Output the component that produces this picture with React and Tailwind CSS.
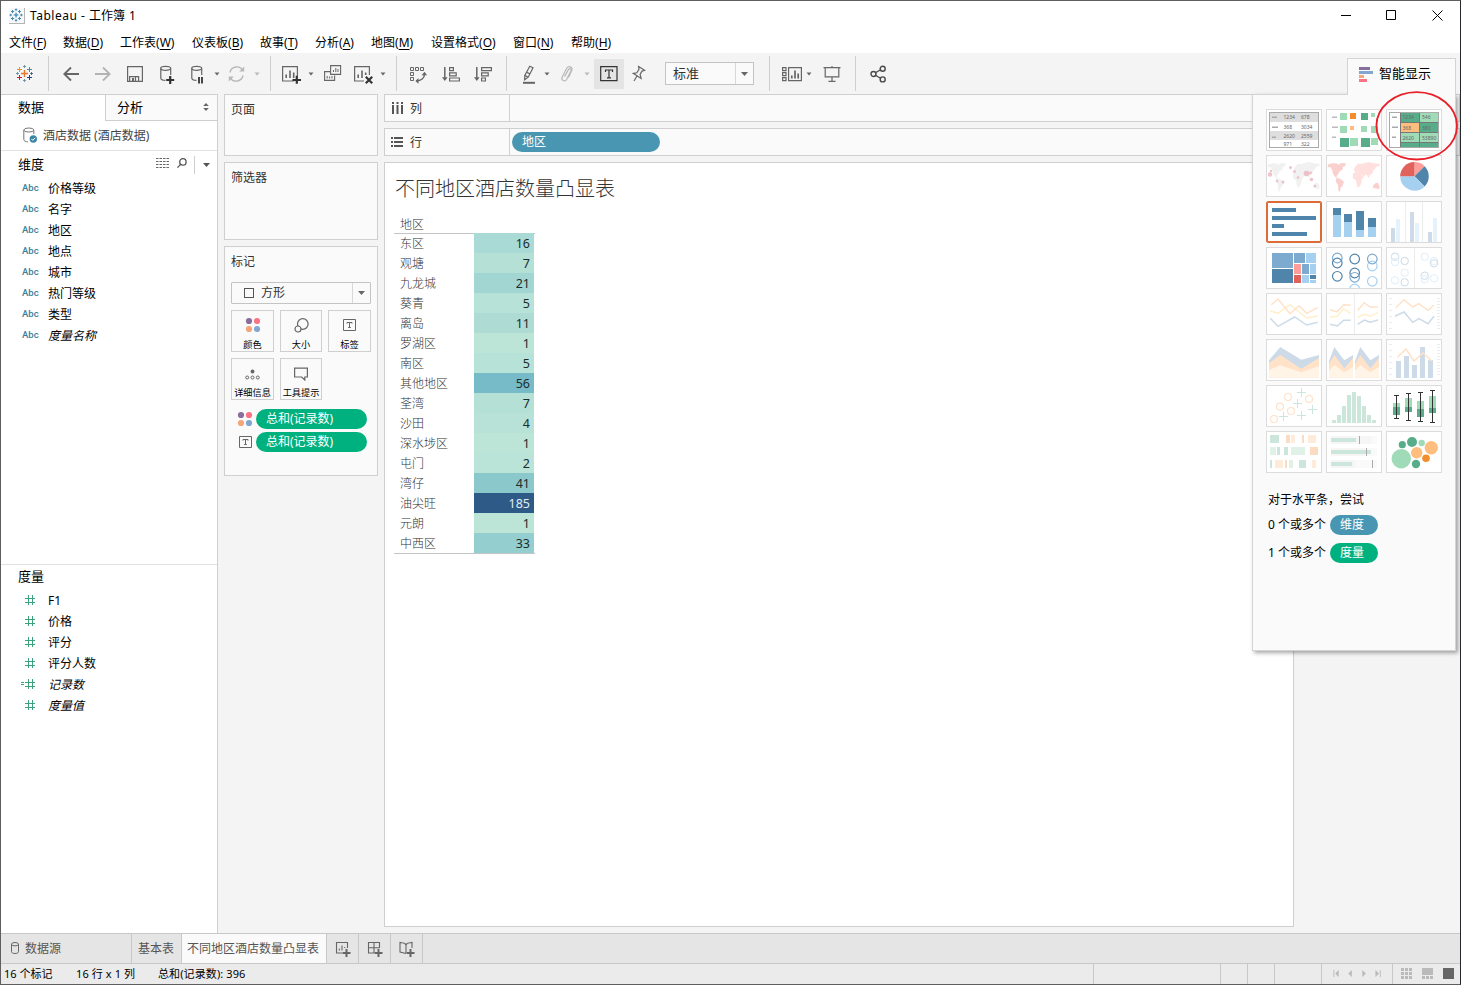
import React from "react";

const MENUS = [
  { label: "文件", k: "F", w: "w-[54px]" },
  { label: "数据", k: "D", w: "w-[57px]" },
  { label: "工作表", k: "W", w: "w-[72px]" },
  { label: "仪表板", k: "B", w: "w-[68px]" },
  { label: "故事", k: "T", w: "w-[55px]" },
  { label: "分析", k: "A", w: "w-[56px]" },
  { label: "地图", k: "M", w: "w-[60px]" },
  { label: "设置格式", k: "O", w: "w-[82px]" },
  { label: "窗口", k: "N", w: "w-[58px]" },
  { label: "帮助", k: "H", w: "w-[60px]" },
];

const DIMENSIONS = ["价格等级", "名字", "地区", "地点", "城市", "热门等级", "类型", "度量名称"];
const MEASURES = ["F1", "价格", "评分", "评分人数", "记录数", "度量值"];

const ROWS = [
  { name: "东区", value: 16, cell: "bg-[#a9dad5]" },
  { name: "观塘", value: 7, cell: "bg-[#b4e0d6]" },
  { name: "九龙城", value: 21, cell: "bg-[#a1d6d2]" },
  { name: "葵青", value: 5, cell: "bg-[#b7e2d7]" },
  { name: "离岛", value: 11, cell: "bg-[#aedcd5]" },
  { name: "罗湖区", value: 1, cell: "bg-[#bce5d8]" },
  { name: "南区", value: 5, cell: "bg-[#b7e2d7]" },
  { name: "其他地区", value: 56, cell: "bg-[#77bbc8]" },
  { name: "荃湾", value: 7, cell: "bg-[#b4e0d6]" },
  { name: "沙田", value: 4, cell: "bg-[#b8e2d7]" },
  { name: "深水埗区", value: 1, cell: "bg-[#bce5d8]" },
  { name: "屯门", value: 2, cell: "bg-[#bae4d8]" },
  { name: "湾仔", value: 41, cell: "bg-[#8ac8cc]" },
  { name: "油尖旺", value: 185, cell: "bg-[#2d5a87]" },
  { name: "元朗", value: 1, cell: "bg-[#bce5d8]" },
  { name: "中西区", value: 33, cell: "bg-[#94cecf]" },
];

const DARK = "#4f84ab";
const MID = "#7daacf";
const LIGHT = "#a6d0f0";
const GREEN = "#57ad8a";
const MINT = "#9fdbb7";
const PALE_BLUE = "#cddbe8";
const PALE_ORANGE = "#ffe2c8";
const PALE_YELLOW = "#fff0cc";
const PALE_GREEN = "#cce6dc";

/* ---------- toolbar ---------- */

const Ico = ({ w, className, color = "#666", children }) => (
  <svg
    width={w}
    height="20"
    viewBox={`0 0 ${w} 20`}
    fill="none"
    stroke={color}
    strokeWidth="1.2"
    className={`shrink-0 ${className}`}
  >
    {children}
  </svg>
);

const Caret = ({ className, color = "#666" }) => (
  <svg width="6" height="4" viewBox="0 0 6 4" fill={color} className={`shrink-0 ${className}`}>
    <path d="M.5 .5h5L3 3.5z" />
  </svg>
);

const Divider = ({ className }) => <div className={`h-[35px] w-px shrink-0 bg-[#cfcfcf] ${className}`} />;

const Plus = ({ x, y, r, color, sw = 1 }) => (
  <path d={`M${x - r} ${y}h${2 * r}M${x} ${y - r}v${2 * r}`} stroke={color} strokeWidth={sw} fill="none" />
);

const Toolbar = () => (
  <div className="flex h-[41px] items-center bg-[#f4f4f4]">
    <Ico w={18} className="ml-[14px]">
      <Plus x={9.5} y={9.5} r={3.5} color="#e8762d" sw={1.4} />
      <Plus x={4.5} y={5.5} r={2.5} color="#eb912c" />
      <Plus x={14.5} y={5.5} r={2.5} color="#59879b" />
      <Plus x={4.5} y={13.5} r={2.5} color="#c72035" />
      <Plus x={14.5} y={13.5} r={2.5} color="#1f457e" />
      <Plus x={9.5} y={2.5} r={1.5} color="#7099a6" />
      <Plus x={9.5} y={16.5} r={1.5} color="#7099a6" />
      <Plus x={2.5} y={9.5} r={1.5} color="#7099a6" />
      <Plus x={16.5} y={9.5} r={1.5} color="#5b6591" />
    </Ico>
    <Divider className="ml-[15px]" />
    <Ico w={16} className="ml-[14px]">
      <path d="M1 10h15M8 3.5L1.3 10L8 16.5" strokeWidth="1.8" />
    </Ico>
    <Ico w={16} className="ml-4" color="#b3b3b3">
      <path d="M0 10h15M8 3.5L14.7 10L8 16.5" strokeWidth="1.8" />
    </Ico>
    <Ico w={16} className="ml-4">
      <path d="M.6 2.6h14.8v14.8H.6zM2.6 17v-4.4h9V17M8.5 12.6V17" />
      <path d="M5 14h2v3H5z" fill="#666" stroke="none" />
    </Ico>
    <Ico w={15} className="ml-[17px]">
      <path d="M.8 4.5v9.5c0 1.4 2 2.3 4.7 2.4M10.7 4.5V11" />
      <ellipse cx="5.7" cy="4.3" rx="5" ry="2" />
      <path d="M6.2 16h8M10.2 12v8" stroke="#333" strokeWidth="2.2" />
    </Ico>
    <Ico w={15} className="ml-4">
      <path d="M.8 4.5v9.5c0 1.4 2 2.3 4.7 2.4M10.7 4.5V11" />
      <ellipse cx="5.7" cy="4.3" rx="5" ry="2" />
      <path d="M8 13v6.5M11 13v6.5" stroke="#333" strokeWidth="1.8" />
    </Ico>
    <Caret className="ml-2" />
    <Ico w={18} className="ml-2" color="#b8b8b8">
      <path d="M2 8.5A7 7 0 0 1 14.8 6.2M15 11.5A7 7 0 0 1 2.2 13.8" strokeWidth="1.4" />
      <path d="M11.2 7.5h5V2.5zM5.8 12.5H.8v5z" fill="#b8b8b8" stroke="none" />
    </Ico>
    <Caret className="ml-2" color="#b8b8b8" />
    <Divider className="ml-[10px]" />
    <Ico w={20} className="ml-[11px]">
      <path d="M12 17H.6V2.6h14.8V12" />
      <path d="M4.2 14v-3.5M8 14V6.5M11.7 14V8.5" strokeWidth="1.6" />
      <path d="M10.5 16h8.5M14.8 11.8v8" stroke="#333" strokeWidth="2.2" />
    </Ico>
    <Caret className="ml-[6px]" />
    <Ico w={18} className="ml-[10px]">
      <path d="M6.6 1.6h10v8.8h-10zM6 7.6H.6v8.8h10v-5" strokeWidth="1.1" />
      <path d="M9.5 8V6M11.8 8V4M14 8V5M3.2 14.5V12M5.6 14.5V12.5M8 14.5V12" strokeWidth="1" />
    </Ico>
    <Ico w={20} className="ml-3">
      <path d="M10 17H.6V2.6h14.8V11" />
      <path d="M4.2 14v-3.5M8 14V6.5M11.7 11V8.5" strokeWidth="1.6" />
      <path d="M11.8 12.8l6.4 6.4M18.2 12.8l-6.4 6.4" stroke="#333" strokeWidth="2.2" />
    </Ico>
    <Caret className="ml-[6px]" />
    <Divider className="ml-[10px]" />
    <Ico w={18} className="ml-[13px]">
      <path d="M.5 3.5h3v3h-3zM5.5 3.5h3v3h-3zM10.5 3.5h3v3h-3zM.5 8.5h3v3h-3zM.5 13.5h3v3h-3z" strokeWidth="1" />
      <path d="M6.500 17c4.500 0 8-2.800 8-7" strokeWidth="1.4" />
      <path d="M8.500 14L5.400 17l3.100 2.800zM11.600 11.300l3-3.500 2.400 3.500z" fill="#666" stroke="none" />
    </Ico>
    <Ico w={18} className="ml-[14px]">
      <path d="M2.8 3v12" strokeWidth="1.5" />
      <path d="M0 13.2h5.6L2.8 17z" fill="#666" stroke="none" />
      <path d="M7.6 3.6h3.8v3H7.6zM7.6 8.8h6.6v3H7.6zM7.6 14h9.8v3H7.6z" />
    </Ico>
    <Ico w={18} className="ml-[14px]">
      <path d="M2.8 3v12" strokeWidth="1.5" />
      <path d="M0 13.2h5.6L2.8 17z" fill="#666" stroke="none" />
      <path d="M7.6 3.6h9.8v3H7.6zM7.6 8.8h6.6v3H7.6zM7.6 14h3.8v3H7.6z" />
    </Ico>
    <Divider className="ml-[14px]" />
    <Ico w={14} className="ml-[15px]">
      <path d="M7.800 2.300l3.200 1.400-4.800 9.500-3.600 2.600.2-4.400zM2.800 11.400l3.400 1.800M4.600 8.200l3.400 1.700" />
      <path d="M1 18.800h12" strokeWidth="2" />
    </Ico>
    <Caret className="ml-2" />
    <Ico w={14} className="ml-[10px]" color="#b8b8b8">
      <path d="M4.600 12.600L8.400 5.600c1.300-1.900 3.400-.6 2.500 1.300L6.600 15.500c-1.700 2.800-5.800.8-4.500-2.200L6.700 4.200C8.500 1.200 13 3 11.800 6.300L8.500 13.500" />
    </Ico>
    <Caret className="ml-[10px]" color="#b8b8b8" />
    <div className="ml-1 flex h-[30px] w-[30px] shrink-0 items-center justify-center bg-[#e4e4e4]">
      <Ico w={18} className="" color="#333">
        <path d="M.7 2.700h16.300v14H.7z" />
        <path d="M5.500 8V6h7v2M9 6v7.800M7 13.800h4" />
      </Ico>
    </div>
    <Ico w={14} className="ml-2">
      <path d="M6.600 2.500l6 3.800-2.600.8-1.900 3.300 1 4-7.600-5 3.300-.6 2.200-3.500zM5 12L2 17" />
    </Ico>
    <div className="ml-[19px] flex h-[23px] w-[89px] shrink-0 items-center border border-[#c4c4c4] bg-[#fafafa] text-[13px] text-[#333]">
      <span className="flex-1 pl-[7px]">标准</span>
      <span className="flex h-full w-[18px] items-center justify-center border-l border-[#d8d8d8]">
        <svg width="7" height="4" viewBox="0 0 7 4" fill="#666"><path d="M0 0h7L3.500 4z" /></svg>
      </span>
    </div>
    <Divider className="ml-[15px]" />
    <Ico w={21} className="ml-3">
      <path d="M.6 3.600h3.400v3H.6zM.6 8.600h3.400v3H.6zM.6 13.600h3.400v3H.6zM6.600 3.600h12.800v13H6.600z" />
      <path d="M9.800 14.500v-3M13 14.500v-8M16.200 14.500v-5" strokeWidth="1.700" />
    </Ico>
    <Caret className="ml-[3px]" />
    <Ico w={18} className="ml-[11px]">
      <path d="M.5 3.600h17M2.200 4v8.800h13.600V4M9 2v1.500M9 13v4M5.500 17.400h7" />
    </Ico>
    <Divider className="ml-[14px]" />
    <Ico w={17} className="ml-[14px]" color="#4a4a4a">
      <path d="M5 9l6-3.500M5 11l6 3.500" strokeWidth="1.300" />
      <circle cx="3.500" cy="10" r="2.500" strokeWidth="1.400" />
      <circle cx="12.700" cy="4.800" r="2.500" strokeWidth="1.400" />
      <circle cx="12.700" cy="15.400" r="2.500" strokeWidth="1.400" />
    </Ico>
  </div>
);

/* ---------- data pane ---------- */

const Hash = () => (
  <svg width="10" height="10" viewBox="0 0 10 10" fill="none" stroke="#3ba27c" strokeWidth="1" className="mb-[2px]">
    <path d="M0 3.500h10M0 7.500h10M3.500 0v10M7.500 0v10" />
  </svg>
);

const DataPane = () => (
  <div className="flex w-[217px] shrink-0 flex-col border-r border-[#cfcfcf] bg-white">
    <div className="flex h-[27px] border-t border-[#cfcfcf] text-[13px] text-black">
      <div className="flex w-[104px] items-center pl-[17px]">数据</div>
      <div className="flex flex-1 items-center justify-between border-b border-l border-[#cfcfcf] bg-[#fafafa] pl-[11px] pr-2">
        分析
        <svg width="6" height="8" viewBox="0 0 6 8" fill="#666" className="mb-[2px]">
          <path d="M3 0l2.800 3H.2zM3 8l2.800-3H.2z" />
        </svg>
      </div>
    </div>
    <div className="flex h-[30px] items-center border-b border-[#e2e2e2] pl-[22px] text-[12px] text-[#444]">
      <svg width="15" height="17" viewBox="0 0 15 17" fill="none" stroke="#777" className="mr-[5px]">
        <ellipse cx="5.800" cy="3" rx="5" ry="2" />
        <path d="M.8 3v9.500c0 1.400 2 2.300 4.200 2.400M10.800 3v4" />
        <circle cx="10.300" cy="12" r="3.700" fill="#3a87a5" stroke="none" />
        <path d="M8.500 12l1.300 1.300 2.400-2.500" stroke="#fff" />
      </svg>
      酒店数据 (酒店数据)
    </div>
    <div className="flex h-[27px] items-center pl-[17px] text-[13px] text-black">
      <span className="w-[138px]">维度</span>
      <svg width="13" height="10" viewBox="0 0 13 10" stroke="#666" strokeWidth="1" className="mb-[3px]">
        <path d="M0 .5h13M0 3.500h13M0 6.500h13M0 9.500h13" strokeDasharray="2.500 1" />
      </svg>
      <svg width="10" height="10" viewBox="0 0 10 10" fill="none" stroke="#555" strokeWidth="1.300" className="mb-[3px] ml-2">
        <circle cx="5.900" cy="3.900" r="3.200" />
        <path d="M3.600 6.400L.5 9.600" />
      </svg>
      <div className="ml-[7px] h-[18px] w-px bg-[#cfcfcf]" />
      <svg width="7" height="4" viewBox="0 0 7 4" fill="#555" className="ml-2"><path d="M0 0h7L3.500 4z" /></svg>
    </div>
    <div className="h-[386px] text-[12px] text-black">
      {DIMENSIONS.map((d) => (
        <div key={d} className="flex h-[21px] items-center pl-[21px]">
          <span className="w-[26px] font-[Roboto] text-[9.5px] font-medium text-[#3a7f9c]">Abc</span>
          <span className={d === "度量名称" ? "italic" : ""}>{d}</span>
        </div>
      ))}
    </div>
    <div className="flex h-[26px] items-center border-t border-[#e2e2e2] pb-[2px] pl-[17px] text-[13px] text-black">度量</div>
    <div className="text-[12px] text-black">
      {MEASURES.map((m) => (
        <div key={m} className="flex h-[21px] items-center pl-[20px]">
          <span className="flex w-[27px] items-center">
            <span className="mb-[2px] flex w-[4px] flex-col gap-px">
              {m === "记录数" && (
                <>
                  <i className="h-px w-[3px] bg-[#3ba27c]" />
                  <i className="h-px w-[3px] bg-[#3ba27c]" />
                </>
              )}
            </span>
            <Hash />
          </span>
          <span className={m === "记录数" || m === "度量值" ? "italic" : ""}>{m}</span>
        </div>
      ))}
    </div>
  </div>
);

/* ---------- cards ---------- */

const ColorDots = () => (
  <svg width="16" height="16" viewBox="0 0 16 16">
    <circle cx="4" cy="4" r="3.100" fill="#876f9b" />
    <circle cx="12" cy="4" r="3.100" fill="#fb7185" />
    <circle cx="4" cy="12" r="3.100" fill="#f4a67a" />
    <circle cx="12" cy="12" r="3.100" fill="#82a6d0" />
  </svg>
);

const LabelIcon = () => (
  <svg width="13" height="12" viewBox="0 0 13 12" fill="none" stroke="#666">
    <path d="M.5 .5h12v11H.5zM4 4.700V3.500h5v1.200M6.500 3.500v5M5.200 8.500h2.600" />
  </svg>
);

const MarkButton = ({ label, children }) => (
  <div className="flex h-[42px] flex-col items-center border border-[#cfcfcf] bg-[#fafafa]">
    <div className="flex h-[28px] items-center justify-center">{children}</div>
    <span className="whitespace-nowrap text-[9.2px] leading-[12px] text-black">{label}</span>
  </div>
);

const Card = ({ title, className, children }) => (
  <div className={`w-[154px] border border-[#cfcfcf] bg-[#fafafa] px-[6px] pt-[6px] ${className}`}>
    <div className="text-[12px] leading-[18px] text-[#333]">{title}</div>
    {children}
  </div>
);

const Cards = () => (
  <div className="ml-[6px] flex shrink-0 flex-col gap-[6px]">
    <Card title="页面" className="h-[62px]" />
    <Card title="筛选器" className="h-[78px]" />
    <Card title="标记" className="h-[230px]">
      <div className="mt-[11px] flex h-[22px] w-[140px] items-center rounded-[1px] border border-[#c4c4c4] text-[12px] text-[#333]">
        <div className="ml-3 mr-[7px] h-[10px] w-[10px] border border-[#555]" />
        <span className="flex-1">方形</span>
        <span className="flex h-full w-[18px] items-center justify-center border-l border-[#d8d8d8]">
          <svg width="7" height="4" viewBox="0 0 7 4" fill="#666"><path d="M0 0h7L3.500 4z" /></svg>
        </span>
      </div>
      <div className="mt-[6px] grid w-[140px] grid-cols-[43px_42px_43px] gap-[6px]">
        <MarkButton label="颜色"><ColorDots /></MarkButton>
        <MarkButton label="大小">
          <svg width="15" height="15" viewBox="0 0 15 15" fill="none" stroke="#666" strokeWidth="1.200">
            <circle cx="8.800" cy="6" r="5.300" />
            <circle cx="4" cy="11" r="3" fill="#fafafa" />
          </svg>
        </MarkButton>
        <MarkButton label="标签"><LabelIcon /></MarkButton>
        <MarkButton label="详细信息">
          <svg width="15" height="11" viewBox="0 0 15 11" fill="none" stroke="#666" className="mt-[3px]">
            <circle cx="7.500" cy="2.500" r="1.900" fill="#666" stroke="none" />
            <circle cx="2.200" cy="8.500" r="1.500" />
            <circle cx="7.500" cy="8.500" r="1.500" />
            <circle cx="12.800" cy="8.500" r="1.500" />
          </svg>
        </MarkButton>
        <MarkButton label="工具提示">
          <svg width="14" height="14" viewBox="0 0 14 14" fill="none" stroke="#666" strokeWidth="1.200" className="mt-px">
            <path d="M.6 1.200h12.800v8.800h-2.600v3L7.600 10H.6z" />
          </svg>
        </MarkButton>
      </div>
      <div className="mt-[9px] flex flex-col gap-[3px]">
        {[<ColorDots key="c" />, <LabelIcon key="l" />].map((icon, i) => (
          <div key={i} className="flex h-5 items-center">
            <div className="ml-[6px] flex w-4 justify-center">{icon}</div>
            <div className="ml-[3px] h-5 w-[111px] rounded-full bg-[#00b180] pl-[10px] text-[12px] leading-[20px] text-white">
              总和(记录数)
            </div>
          </div>
        ))}
      </div>
    </Card>
  </div>
);

/* ---------- shelves and view ---------- */

const View = () => (
  <div className="ml-[6px] flex flex-1 flex-col">
    <div className="flex h-[28px] items-center border border-[#cfcfcf] bg-[#fafafa] text-[12px] text-[#333]">
      <div className="flex h-full w-[125px] items-center border-r border-[#cfcfcf] pl-[7px] pt-px">
        <svg width="11" height="12" viewBox="0 0 11 12" stroke="#555" strokeWidth="2" className="mb-[2px] mr-[7px]">
          <path d="M1 0v2M5.500 0v2M10 0v2M1 3v9M5.500 3v9M10 3v9" />
        </svg>
        列
      </div>
    </div>
    <div className="mt-[6px] flex h-[28px] items-center border border-[#cfcfcf] bg-[#fafafa] text-[12px] text-[#333]">
      <div className="flex h-full w-[125px] items-center border-r border-[#cfcfcf] pl-[6px] pt-px">
        <svg width="12" height="10" viewBox="0 0 12 10" stroke="#555" strokeWidth="2" className="mb-[2px] mr-[7px]">
          <path d="M0 1h2M0 5h2M0 9h2M3 1h9M3 5h9M3 9h9" />
        </svg>
        行
      </div>
      <div className="ml-[2px] h-5 w-[148px] rounded-full bg-[#4996b2] pl-[10px] text-[12px] leading-[20px] text-white">地区</div>
    </div>
    <div className="mt-[6px] h-[765px] w-[910px] border border-[#cfcfcf] bg-white pl-[9px] pt-[9px]">
      <div className="pl-px text-[20px] font-light leading-[33px] text-[#333]">不同地区酒店数量凸显表</div>
      <div className="mt-[9px] w-[141px] border-b border-[#c4c4c4]">
        <div className="h-5 border-b border-[#c4c4c4] pl-[6px] text-[12px] font-light leading-[21px] text-[#333]">地区</div>
        <div className="relative -mt-px">
          {ROWS.map((r) => (
            <div key={r.name} className="flex h-5">
              <span className="w-20 pl-[6px] text-[12px] font-light leading-[21px] text-[#333]">{r.name}</span>
              <span
                className={`w-[60px] pr-[4px] text-right text-[12.5px] leading-[22px] ${r.cell} ${r.value > 100 ? "text-[#e4ecf2]" : "text-[#1c2b2b]"}`}
              >
                {r.value}
              </span>
            </div>
          ))}
        </div>
      </div>
    </div>
  </div>
);

/* ---------- show me ---------- */

const Rects = ({ data }) => data.map(([x, y, w, h, c], i) => <rect key={i} x={x} y={y} width={w} height={h} fill={c} />);

const Rings = ({ data, r, sw = 1 }) =>
  data.map(([x, y, c], i) => <circle key={i} cx={x} cy={y} r={r} fill="none" stroke={c} strokeWidth={sw} />);

const Poly = ({ points, c, sw = 1.5 }) => <polyline points={points} fill="none" stroke={c} strokeWidth={sw} />;

const Tiny = ({ x, y, fill = "#666", children }) => (
  <text x={x} y={y} fontSize="5" fill={fill}>
    {children}
  </text>
);

const World = ({ a, b }) => (
  <>
    <g fill={a}>
      <path d="M.8 8.500l5-1.200 4 .3 1.500 1.200 3-1.800 4.500.2-.8 3-2.400.7.4 2.400-3.200 2-1.400 2.400-1.400 1.600-.4 2 2 1.200-1 .3-2.800-2.400-2-3-.4-3-2-3.300-2.600.5z" />
      <path d="M9.500 22l3.500.8 4 3-1.200 3.400-2 2.200-.9 4.300-1.400-.8-.6-6-2.200-3.600z" />
    </g>
    <g fill={b}>
      <path d="M27 13l1.200-2.600 3-2.800 2 .4 3.600-.8 5-1.200 5 1.200 6 .8-.8 2.200-3 .6-1 2.800-1.600.2-.8 3.400-2.600 1.800-1.600 3.200-1.200-2.800-1.800-1.200-1.600 3.400-1.800-3.200-2.800-1.600-1.800-1.400-1.400.8-2-1.400z" />
      <path d="M26 17.500l3-1.700 4.400 1 3 5-1.600 1.800-.8 4.400-2.200 3.600-1.800-.8-1-6.600-3.200-2z" />
    </g>
    <path d="M46 29.500l2.800-2.500 2-.3 2 4-1 2.600-2.300-.8-3.400-.4z" fill={a} />
  </>
);

const AreaTrio = () => (
  <>
    <path d="M0 21L5.300 7l10 13.300 8.700-5.300v22.700H0z" fill={PALE_BLUE} />
    <path d="M0 24l5.300-9 10 13.300L24 18v19.700H0z" fill={PALE_ORANGE} />
    <path d="M0 30.500L5.300 25l10 7.300L24 27v10.700H0z" fill="#fff4e6" />
  </>
);

const Axes = () => (
  <path
    d="M2 4.500h3M2 10.500h3M2 16.500h3M2 22.500h3M2 28.500h3M2 34.500h3M50 4.500h3M50 7.500h3M50 10.500h3M50 13.500h3M50 16.500h3M50 19.500h3M50 22.500h3M50 25.500h3M50 28.500h3M50 31.500h3M50 34.500h3"
    stroke="#ececec"
  />
);

const THUMBS = [
  // text table
  <>
    <Rects data={[[2, 2, 50, 10, "#dedede"], [2, 21, 50, 9, "#dedede"], [5, 6.5, 5, 1.5, "#aaa"], [5, 16.5, 6, 1.5, "#aaa"], [5, 26.5, 4, 1.5, "#aaa"]]} />
    <Tiny x={16.5} y={9}>1234</Tiny><Tiny x={34} y={9}>678</Tiny>
    <Tiny x={16.5} y={18.5}>368</Tiny><Tiny x={34} y={18.5}>3034</Tiny>
    <Tiny x={16.5} y={27.5}>2620</Tiny><Tiny x={34} y={27.5}>2559</Tiny>
    <Tiny x={16.5} y={35.5}>971</Tiny><Tiny x={34} y={35.5}>322</Tiny>
    <rect x="2.500" y="2.500" width="49" height="35" fill="none" stroke="#aaa" />
  </>,
  // heat map
  <Rects
    data={[
      [5, 6.5, 5, 1.5, "#bbb"], [5, 16.5, 6, 1.5, "#bbb"], [5, 26.5, 4, 1.5, "#bbb"],
      [13, 3, 7, 7, MINT], [23, 3, 6, 6, "#f28e2b"], [34, 3, 7, 7, GREEN], [44, 3, 4, 4, MINT],
      [13, 16, 7, 7, MINT], [23, 16, 4, 4, "#ffbe7d"], [34, 16, 6, 6, MINT], [44, 16, 7, 7, MINT],
      [13, 28, 9, 9, GREEN], [23, 28, 8, 8, MINT], [34, 28, 9, 9, GREEN], [44, 28, 7, 7, MINT],
    ]}
  />,
  // highlight table
  <>
    <Rects
      data={[
        [13, 2, 39, 36, "#777"], [5, 6.5, 5, 1.5, "#aaa"], [5, 16.5, 6, 1.5, "#aaa"], [5, 26.5, 4, 1.5, "#aaa"],
        [14, 3, 18, 9, GREEN], [33, 3, 18, 9, MINT], [14, 13, 18, 9, "#ffbe7d"], [33, 13, 18, 9, GREEN],
        [14, 23, 18, 9, MINT], [33, 23, 18, 9, MINT], [14, 33, 18, 4, GREEN], [33, 33, 18, 4, GREEN],
      ]}
    />
    <Tiny x={15.5} y={9}>1234</Tiny><Tiny x={35} y={9}>546</Tiny>
    <Tiny x={15.5} y={19.5}>368</Tiny><Tiny x={35} y={19.5}>380</Tiny>
    <Tiny x={15.5} y={29.5}>2620</Tiny><Tiny x={35} y={29.5}>53890</Tiny>
    <rect x="2.500" y="2.500" width="49" height="35" fill="none" stroke="#aaa" />
  </>,
  // symbol map
  <>
    <World a="#f1f1f1" b="#f1f1f1" />
    <g fill="#eab4bb" fillOpacity=".8">
      <circle cx="3" cy="18.500" r="2.200" /><circle cx="4" cy="15" r="1.200" /><circle cx="10" cy="25" r="1.200" />
      <circle cx="23.500" cy="11.500" r="1.500" /><circle cx="27.500" cy="15.500" r="1.500" /><circle cx="31" cy="21.500" r="1.300" />
      <circle cx="39.500" cy="17.500" r="2.800" /><circle cx="43.500" cy="17" r="1.400" /><circle cx="44.500" cy="23.500" r="1.800" />
      <circle cx="48" cy="30" r="1.300" /><circle cx="16" cy="26" r="1.500" />
    </g>
  </>,
  // filled map
  <World a="#f9d0cd" b="#ffe0de" />,
  // pie
  <>
    <path d="M27.500 20.300V6A14.300 14.300 0 0 1 37.600 10.200z" fill="#ff9d9a" />
    <path d="M27.500 20.300L37.600 10.200A14.300 14.300 0 0 1 37.600 30.400z" fill={DARK} />
    <path d="M27.500 20.300L37.600 30.400A14.300 14.300 0 0 1 13.200 20.300z" fill={LIGHT} />
    <path d="M27.500 20.300H13.200A14.300 14.300 0 0 1 27.500 6z" fill="#e0625a" />
  </>,
  // horizontal bars
  <Rects data={[[5, 6, 24, 4, DARK], [5, 14, 44, 4, DARK], [5, 22, 12, 4, DARK], [5, 30, 35, 4, DARK]]} />,
  // stacked bars
  <Rects
    data={[
      [6, 6, 8, 7, DARK], [6, 13, 8, 22, LIGHT], [17, 12, 8, 8, DARK], [17, 20, 8, 15, LIGHT],
      [29, 9, 8, 19, DARK], [29, 28, 8, 7, LIGHT], [41, 16, 8, 9, DARK], [41, 25, 8, 10, LIGHT],
    ]}
  />,
  // side-by-side bars
  <Rects
    data={[
      [4, 26, 4, 14, PALE_BLUE], [9, 17, 4, 23, "#e5f1fb"], [18, 0, 1, 40, "#ececec"],
      [23, 10, 4, 30, PALE_BLUE], [28, 21, 4, 19, "#e5f1fb"], [35, 0, 1, 40, "#ececec"],
      [41, 30, 4, 10, PALE_BLUE], [46, 16, 4, 24, "#e5f1fb"],
    ]}
  />,
  // treemap
  <Rects
    data={[
      [5, 5, 21, 15, MID], [5, 21, 21, 14, DARK], [27, 5, 11, 10, MID], [39, 5, 10, 10, LIGHT],
      [27, 16, 7, 10, "#ff9d9a"], [35, 16, 7, 10, MID], [43, 16, 6, 10, LIGHT],
      [27, 27, 7, 8, "#e0625a"], [35, 27, 7, 8, LIGHT], [43, 27, 6, 4, DARK], [43, 32, 6, 3, LIGHT],
    ]}
  />,
  // circle view
  <Rings
    r={4.8}
    sw={1.2}
    data={[
      [10.3, 10, MID], [10.3, 15, DARK], [10.3, 28.3, DARK], [27.7, 11, DARK], [27.7, 25, DARK],
      [27.7, 29.3, MID], [27.7, 41, LIGHT], [45.3, 18, LIGHT], [45.3, 11, MID], [45.3, 33.3, LIGHT],
    ]}
  />,
  // side-by-side circles
  <>
    <rect x="27" width="1" height="40" fill="#ececec" />
    <Rings
      r={3.7}
      data={[
        [8, 8.7, PALE_BLUE], [8, 14, "#e0eefa"], [17.7, 13, PALE_BLUE], [17.7, 24.7, "#e0eefa"],
        [8, 32.3, "#e0eefa"], [17.7, 34.3, PALE_BLUE], [37.7, 8.7, "#e0eefa"], [47, 13, "#e0eefa"],
        [47, 15.3, PALE_BLUE], [37.7, 27.7, PALE_BLUE], [37.7, 31.3, "#e0eefa"], [47, 30.3, "#e0eefa"],
      ]}
    />
  </>,
  // continuous lines
  <>
    <Poly points="3.3,16.7 11,19.3 23,10.7 39.7,24 50.7,22" c={PALE_YELLOW} />
    <Poly points="4.3,10.7 11,5 23,19.7 32,11.7 39.7,19.3 50.7,13.7" c={PALE_ORANGE} />
    <Poly points="3.3,24.3 11,32.3 27.7,23 39.7,31 50.7,28.3" c={PALE_BLUE} />
  </>,
  // discrete lines
  <>
    <rect x="27" width="1" height="40" fill="#ececec" />
    <Poly points="3,15.7 10,18 16.7,10.7 23.7,11.3" c={PALE_ORANGE} />
    <Poly points="30.7,16.3 37.3,8.7 43.3,13.3 51,12.7" c={PALE_ORANGE} />
    <Poly points="3,23.3 10.3,22.3 16.7,14.7 23.3,19.3" c={PALE_YELLOW} />
    <Poly points="30.7,23.3 37.3,20.3 43.3,22.3 51,18.3" c={PALE_YELLOW} />
    <Poly points="3,30.3 10.3,32 16.7,26.3 23.7,26.3" c={PALE_BLUE} />
    <Poly points="30.7,30.3 37.3,26 43.3,28.3 51,26" c={PALE_BLUE} />
  </>,
  // dual lines
  <>
    <Axes />
    <Poly points="8.7,13.7 17,5.7 25.7,13 31.7,9.7 41,16.3 47,11" c={PALE_ORANGE} />
    <Poly points="8,22.3 17,18 25.7,28.3 32,24.7 41,29.7 47,22.3" c={PALE_BLUE} />
  </>,
  // continuous area
  <>
    <path d="M2 20.300L13.300 7l21 12.700L52 15v22.700H2z" fill={PALE_BLUE} />
    <path d="M2 23.300l11.300-8.300 21 13.700L52 18v19.700H2z" fill={PALE_ORANGE} />
    <path d="M2 30l11.300-4.700 21 7L52 26.300v11.400H2z" fill="#fff4e6" />
  </>,
  // discrete area
  <>
    <g transform="translate(2 0)"><AreaTrio /></g>
    <g transform="translate(28 0)"><AreaTrio /></g>
  </>,
  // dual combination
  <>
    <Axes />
    <Rects data={[[9, 21, 5, 17, PALE_BLUE], [17, 16, 5, 22, PALE_BLUE], [25, 25, 5, 13, PALE_BLUE], [33, 7, 5, 31, PALE_BLUE], [41, 20, 5, 18, PALE_BLUE]]} />
    <Poly points="10.3,17.3 19,9 27,21 36,13 44.7,21" c={PALE_ORANGE} />
  </>,
  // scatter
  <>
    <Rings r={3.5} sw={1.2} data={[[21, 11, PALE_ORANGE], [42, 13, PALE_ORANGE], [13, 20.7, PALE_ORANGE], [24, 25, PALE_ORANGE], [7, 33, PALE_ORANGE]]} />
    {[[34.5, 6.5], [30.5, 17.5], [45.5, 23.5], [16.5, 30.5], [34.5, 29.5]].map(([x, y]) => (
      <Plus key={`${x}-${y}`} x={x} y={y} r={4.5} color={PALE_GREEN} />
    ))}
  </>,
  // histogram
  <Rects data={[34, 29, 20, 9, 6, 10, 20, 29, 34].map((y, i) => [5 + i * 5, y, 4, 37 - y, PALE_GREEN])} />,
  // box plot
  <>
    <Rects
      data={[
        [6, 17, 7, 4, MINT], [6, 21, 7, 8, GREEN], [18, 12, 7, 9, MINT], [18, 21, 7, 5, GREEN],
        [30, 15, 7, 8, MINT], [30, 23, 7, 8, GREEN], [42, 10, 7, 12, MINT], [42, 22, 7, 5, GREEN],
      ]}
    />
    <path
      d="M9.500 9.500v23M7 9.500h5M7 32.500h5M21.500 7.500v27M19 7.500h5M19 34.500h5M33.500 6.500v29M31 6.500h5M31 35.500h5M45.500 4.500v32M43 4.500h5M43 36.500h5"
      stroke="#333"
    />
  </>,
  // gantt
  <Rects
    data={[
      [3, 3, 9, 8, PALE_GREEN], [19, 3, 4, 8, "#fcdcc0"], [24, 3, 4, 8, "#ffebd9"], [35, 3, 2, 8, "#fcdcc0"], [41, 3, 8, 8, "#ffebd9"],
      [3, 15, 6, 8, "#e0f2e8"], [10, 15, 3, 8, PALE_GREEN], [17, 15, 4, 8, PALE_GREEN], [24, 15, 14, 8, "#e0f2e8"], [43, 15, 8, 8, "#fcdcc0"],
      [3, 28, 2, 8, PALE_GREEN], [8, 28, 8, 8, "#ffebd9"], [18, 28, 2, 8, "#fcdcc0"], [22, 28, 4, 8, "#e0f2e8"], [32, 28, 7, 8, PALE_GREEN], [45, 28, 4, 8, "#ffebd9"],
    ]}
  />,
  // bullet
  <Rects
    data={[
      [4, 4, 46, 8, "#fafafa"], [4, 4, 40, 8, "#f6f6f6"], [4, 6, 25, 4, PALE_GREEN], [32, 4, 1, 8, "#aaa"],
      [4, 16, 46, 8, "#fafafa"], [4, 16, 34, 8, "#f6f6f6"], [4, 18, 40, 4, PALE_GREEN], [39, 16, 1, 8, "#aaa"],
      [4, 28, 46, 8, "#fafafa"], [4, 28, 24, 8, "#f6f6f6"], [4, 30, 21, 4, PALE_GREEN], [45, 28, 1, 8, "#aaa"],
    ]}
  />,
  // packed bubbles
  <>
    <circle cx="14.300" cy="26.700" r="9.700" fill={MINT} />
    <circle cx="15.300" cy="12.700" r="3.600" fill={GREEN} />
    <circle cx="25" cy="10" r="5" fill={GREEN} />
    <circle cx="34.700" cy="11" r="3.200" fill={MINT} />
    <circle cx="44.300" cy="15.700" r="6.700" fill="#ffbe7d" />
    <circle cx="29.700" cy="20.700" r="5.700" fill="#ffbe7d" />
    <circle cx="39" cy="26.300" r="3.800" fill="#f28e2b" />
    <circle cx="29" cy="32" r="4.200" fill={GREEN} />
  </>,
];

const ShowMe = () => (
  <div className="absolute right-[4px] top-[57px] w-[204px]">
    <div className="relative z-10 ml-auto flex h-[37px] w-[109px] items-center border-l border-t border-r border-[#d4d4d4] bg-[#fafafa] pb-[6px] pl-[11px] text-[13px] text-black">
      <svg width="14" height="15" viewBox="0 0 14 15" className="mr-[6px]">
        <Rects data={[[0, 0, 11, 3, "#876f9b"], [0, 4, 14, 3, "#82a6d0"], [0, 8, 5, 3, "#f4a67a"], [0, 12, 8, 3, "#fb7185"]]} />
      </svg>
      智能显示
    </div>
    <div className="-mt-px h-[557px] border border-[#d4d4d4] bg-[#fafafa] pl-[13px] pt-[14px] shadow-[2px_2px_4px_rgba(0,0,0,0.35)]">
      <div className="grid grid-cols-[56px_56px_56px] gap-1">
        {THUMBS.map((t, i) => (
          <div
            key={i}
            className={`h-[42px] w-[56px] border bg-white ${i === 6 ? "rounded-[2px] border-[#dd6b35] ring-1 ring-inset ring-[#dd6b35]" : "border-[#dcdcdc]"}`}
          >
            <svg width="54" height="40" viewBox="0 0 54 40">{t}</svg>
          </div>
        ))}
      </div>
      <div className="mt-[17px] pl-[2px] text-[12px] text-black">
        <div className="leading-5">对于水平条，尝试</div>
        <div className="mt-[5px] flex h-5 items-center">
          <span className="w-[62px] whitespace-nowrap">0 个或多个</span>
          <span className="h-5 w-12 rounded-full bg-[#4996b2] text-center leading-[20px] text-white">
            <span className="mr-1">维度</span>
          </span>
        </div>
        <div className="mt-2 flex h-5 items-center">
          <span className="w-[62px] whitespace-nowrap">1 个或多个</span>
          <span className="h-5 w-12 rounded-full bg-[#00b180] text-center leading-[20px] text-white">
            <span className="mr-1">度量</span>
          </span>
        </div>
      </div>
    </div>
    <svg width="86" height="71" viewBox="0 0 86 71" fill="none" className="absolute -right-[4px] top-[33px] z-20">
      <ellipse cx="42.700" cy="34.800" rx="40.300" ry="33.700" stroke="#e8202a" strokeWidth="1.800" />
    </svg>
  </div>
);

/* ---------- bottom ---------- */

const NewTab = ({ children }) => (
  <div className="flex w-8 items-center justify-center border-r border-[#c8c8c8]">
    <svg width="16" height="16" viewBox="0 0 16 16" fill="none" stroke="#666" strokeWidth="1.100">
      {children}
      <path d="M7.500 12h8M11.500 8v8" strokeWidth="2" />
    </svg>
  </div>
);

const SheetTabs = () => (
  <div className="flex h-[31px] border-b border-t border-[#c8c8c8] bg-[#e5e5e5] text-[12px] text-[#555]">
    <div className="flex w-[131px] items-center border-r border-[#c8c8c8] pl-[10px]">
      <svg width="8" height="12" viewBox="0 0 8 12" fill="none" stroke="#666" className="mb-[2px] mr-[6px]">
        <ellipse cx="4" cy="2.200" rx="3.500" ry="1.700" />
        <path d="M.5 2.200v7.500c0 2.400 7 2.400 7 0V2.200" />
      </svg>
      数据源
    </div>
    <div className="flex w-[50px] items-center border-r border-[#c8c8c8] pl-[6px]">基本表</div>
    <div className="flex w-[145px] items-center border-r border-[#c8c8c8] bg-[#fafafa] pl-[5px]">不同地区酒店数量凸显表</div>
    <NewTab>
      <path d="M7 12H1.500V1.500h11V7M4.300 9.500V7.500M7 9.500v-5M9.700 7V6" />
    </NewTab>
    <NewTab>
      <path d="M7 12H1.500V1.500h11V7M1.500 6.800h11M7 1.500V12" />
    </NewTab>
    <NewTab>
      <path d="M7 12.500L1 11V1.500l2 .3C5 2 6.500 2.600 7 4c.5-1.400 2-2 4-2.200l2-.3V7M7 4v8" />
    </NewTab>
  </div>
);

const StatusBar = () => (
  <div className="flex h-5 items-center bg-[#ebebeb] text-[11px] text-black">
    <span className="ml-[3px] w-[72px]">16 个标记</span>
    <span className="w-[82px] tracking-[0.1px]">16 行 x 1 列</span>
    <span className="flex-1 tracking-[0.1px]">总和(记录数): 396</span>
    <div className="flex h-full">
      <div className="w-[127px] border-l border-[#c8c8c8]" />
      <div className="w-[27px] border-l border-[#c8c8c8]" />
      <div className="w-[27px] border-l border-[#c8c8c8]" />
      <div className="w-[47px] border-l border-[#c8c8c8]" />
      <div className="flex w-[71px] items-center border-l border-[#c8c8c8] pb-px pl-2">
        <svg width="55" height="7" viewBox="0 0 55 8" fill="#bababa">
          <path d="M0 0h1v8H0zM6 0v8L2 4zM21 0v8l-4-4zM33 0v8l4-4zM48 0v8l4-4zM53 0h1v8h-1z" />
        </svg>
      </div>
      <div className="flex w-[68px] items-center border-l border-[#c8c8c8] pb-px pl-2">
        <svg width="54" height="11" viewBox="0 0 54 11" fill="#bababa">
          <path d="M0 0h3v3H0zM4 0h3v3H4zM8 0h3v3H8zM0 4h3v3H0zM4 4h3v3H4zM8 4h3v3H8zM0 8h3v3H0zM4 8h3v3H4zM8 8h3v3H8zM21 0h11v7H21zM21 8h3v3h-3zM25 8h3v3h-3zM29 8h3v3h-3z" />
          <path d="M42 0h11v11H42z" fill="#666" />
        </svg>
      </div>
    </div>
  </div>
);

const App = () => {
  return (
    <div className="relative flex h-[985px] w-[1461px] flex-col overflow-hidden border border-[#5f5f5f] border-r-[#25282c] bg-[#f4f4f4] font-['Noto_Sans','Noto_Sans_CJK_SC',sans-serif]">
      <div className="flex h-[29px] items-center bg-white pl-2 text-[12px] text-black">
        <svg width="16" height="16" viewBox="0 0 16 16" className="mr-[5px] border-b border-r border-[#b5b5b5] bg-[#f6f8fa]">
          <Plus x={7.5} y={7.5} r={2.5} color="#2d7ba8" sw={1.2} />
          <Plus x={3.8} y={3.8} r={1.7} color="#3e84ad" />
          <Plus x={11.2} y={3.8} r={1.7} color="#3e84ad" />
          <Plus x={3.8} y={11.2} r={1.7} color="#3e84ad" />
          <Plus x={11.2} y={11.2} r={1.7} color="#3e84ad" />
          <Plus x={7.5} y={1.8} r={1.3} color="#3e84ad" />
          <Plus x={7.5} y={13.2} r={1.3} color="#3e84ad" />
          <Plus x={1.8} y={7.5} r={1.3} color="#3e84ad" />
          <Plus x={13.2} y={7.5} r={1.3} color="#3e84ad" />
        </svg>
        <span className="flex-1 whitespace-pre pt-px">
          <span className="tracking-[0.5px]">Tableau - </span>工作簿 <span className="ml-px">1</span>
        </span>
        <svg width="102" height="11" viewBox="0 0 102 11" fill="none" stroke="#000" className="mr-[17px]">
          <path d="M0 5.500h10M45.500 .5h9v9h-9zM91.500 .5l10 10M101.500 .5l-10 10" />
        </svg>
      </div>
      <div className="flex h-[23px] items-center bg-white pl-2 pt-[2px] text-[12px] text-black">
        {MENUS.map((m) => (
          <span key={m.k} className={`whitespace-nowrap ${m.w}`}>
            {m.label}(<span className="underline underline-offset-2">{m.k}</span>)
          </span>
        ))}
      </div>
      <Toolbar />
      <div className="flex h-[839px]">
        <DataPane />
        <Cards />
        <View />
      </div>
      <SheetTabs />
      <StatusBar />
      <ShowMe />
    </div>
  );
};

export default App;
